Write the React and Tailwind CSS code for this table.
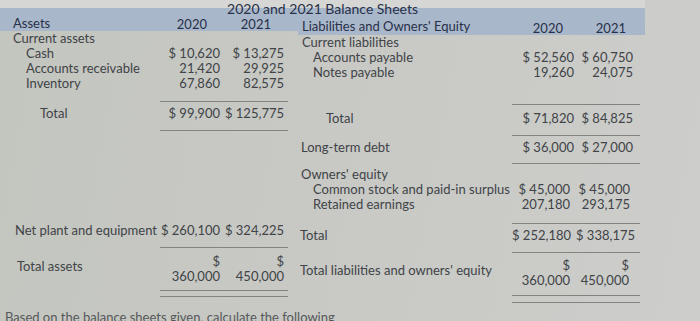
import React from 'react';

const Line = ({ className }) => <div className={`h-px bg-[#81847f] ${className}`} />;

const LeftRow = ({ label, pad, a, b, className = '' }) => (
  <div className={`flex h-[15px] leading-[15px] ${className}`}>
    <div className={`w-[160px] whitespace-nowrap ${pad}`}>{label}</div>
    <div className="w-[62px] pr-[2px] text-right whitespace-nowrap">{a}</div>
    <div className="w-[66px] pr-[4px] text-right whitespace-nowrap">{b}</div>
  </div>
);

// lower rows on the right drift a few px left in the photo
const RightRow = ({ label, pad, a, b, low, className = '' }) => (
  <div className={`flex h-[15px] leading-[15px] ${className}`}>
    <div className={`w-[214px] whitespace-nowrap ${pad}`}>{label}</div>
    <div className={`w-[64px] text-right whitespace-nowrap ${low ? 'pr-[6px]' : 'pr-[2px]'}`}>{a}</div>
    <div className={`w-[64px] text-right whitespace-nowrap ${low ? 'pr-[10px]' : 'pr-[7px]'}`}>{b}</div>
  </div>
);

const App = () => {
  return (
    <div className="w-[700px] h-[321px] overflow-hidden bg-[linear-gradient(100deg,#c3c5bf_0%,#c8c9c4_45%,#cdcecb_100%)] font-['Lato',sans-serif] text-[13px] text-[#404347]">
      {/* title row, band starts 8px down */}
      <div className="w-[645px] h-[17px] pt-[2px] bg-[linear-gradient(to_bottom,#d6d7d4_8px,#a9b7ca_8px)] text-center text-[14px] leading-[14px] text-[#283049]">
        2020 and 2021 Balance Sheets
      </div>

      <div className="flex">
        {/* assets */}
        <div className="w-[298px] flex flex-col">
          <div className="flex h-[14px] bg-[#a9b7ca] text-[#283049]">
            <div className="w-[160px] pl-[13px] leading-[12px]">Assets</div>
            <div className="w-[62px] pr-[15px] text-right leading-[14px]">2020</div>
            <div className="w-[66px] pr-[17px] text-right leading-[14px]">2021</div>
          </div>
          <LeftRow label="Current assets" pad="pl-[13px]" />
          <LeftRow label="Cash" pad="pl-[26px]" a="$ 10,620" b="$ 13,275" />
          <LeftRow label="Accounts receivable" pad="pl-[26px]" a="21,420" b="29,925" />
          <LeftRow label="Inventory" pad="pl-[26px]" a="67,860" b="82,575" />
          <Line className="mt-[10px] ml-[160px] w-[128px]" />
          <LeftRow label="Total" pad="pl-[40px]" a="$ 99,900" b="$ 125,775" className="mt-[4px]" />
          <Line className="mt-[9px] ml-[160px] w-[128px]" />
          <LeftRow label="Net plant and equipment" pad="pl-[15px]" a="$ 260,100" b="$ 324,225" className="mt-[92px]" />
          <Line className="mt-[9px] ml-[160px] w-[128px]" />
          <div className="flex mt-[6px] leading-[15px]">
            <div className="w-[160px] pl-[17px] leading-[22px] pt-[1px]">Total assets</div>
            <div className="w-[62px] pr-[2px] text-right">
              <div>$</div>
              <div>360,000</div>
            </div>
            <div className="w-[66px] pr-[4px] text-right">
              <div>$</div>
              <div>450,000</div>
            </div>
          </div>
          <Line className="mt-[6px] ml-[160px] w-[128px]" />
          <Line className="mt-[5px] ml-[160px] w-[128px]" />
        </div>

        {/* liabilities */}
        <div className="w-[347px] flex flex-col">
          <div className="flex h-[18px] bg-[#a9b7ca] text-[#283049]">
            <div className="w-[214px] pl-[4px] leading-[18px] whitespace-nowrap">Liabilities and Owners' Equity</div>
            <div className="w-[64px] pr-[13px] text-right leading-[22px]">2020</div>
            <div className="w-[64px] pr-[14px] text-right leading-[22px]">2021</div>
          </div>
          <RightRow label="Current liabilities" pad="pl-[4px]" />
          <RightRow label="Accounts payable" pad="pl-[15px]" a="$ 52,560" b="$ 60,750" />
          <RightRow label="Notes payable" pad="pl-[15px]" a="19,260" b="24,075" />
          <Line className="mt-[24px] ml-[214px] w-[128px]" />
          <RightRow label="Total" pad="pl-[28px]" a="$ 71,820" b="$ 84,825" className="mt-[6px]" />
          <Line className="mt-[9px] ml-[214px] w-[128px]" />
          <RightRow label="Long-term debt" pad="pl-[3px]" a="$ 36,000" b="$ 27,000" className="mt-[4px]" />
          <Line className="mt-[8px] ml-[214px] w-[128px]" />
          <RightRow label="Owners' equity" pad="pl-[3px]" className="mt-[3px]" />
          <RightRow label="Common stock and paid-in surplus" pad="pl-[15px]" a="$ 45,000" b="$ 45,000" low />
          <RightRow label="Retained earnings" pad="pl-[15px]" a="207,180" b="293,175" low />
          <Line className="mt-[11px] ml-[214px] w-[128px]" />
          <RightRow label="Total" pad="pl-[2px]" a="$ 252,180" b="$ 338,175" low className="mt-[4px]" />
          <Line className="mt-[9px] ml-[214px] w-[128px]" />
          <div className="flex mt-[5px] leading-[15px]">
            <div className="w-[214px] pl-[2px] leading-[24px] whitespace-nowrap">Total liabilities and owners' equity</div>
            <div className="w-[64px] pr-[6px] text-right">
              <div>$</div>
              <div>360,000</div>
            </div>
            <div className="w-[64px] pr-[11px] text-right">
              <div>$</div>
              <div>450,000</div>
            </div>
          </div>
          <Line className="mt-[7px] ml-[214px] w-[128px]" />
          <Line className="mt-[6px] ml-[214px] w-[128px]" />
        </div>
      </div>

      <div className="mt-[7px] pl-[5px] leading-[14px] whitespace-nowrap text-[#55585a]">
        Based on the balance sheets given, calculate the following
      </div>
    </div>
  );
};

export default App;
